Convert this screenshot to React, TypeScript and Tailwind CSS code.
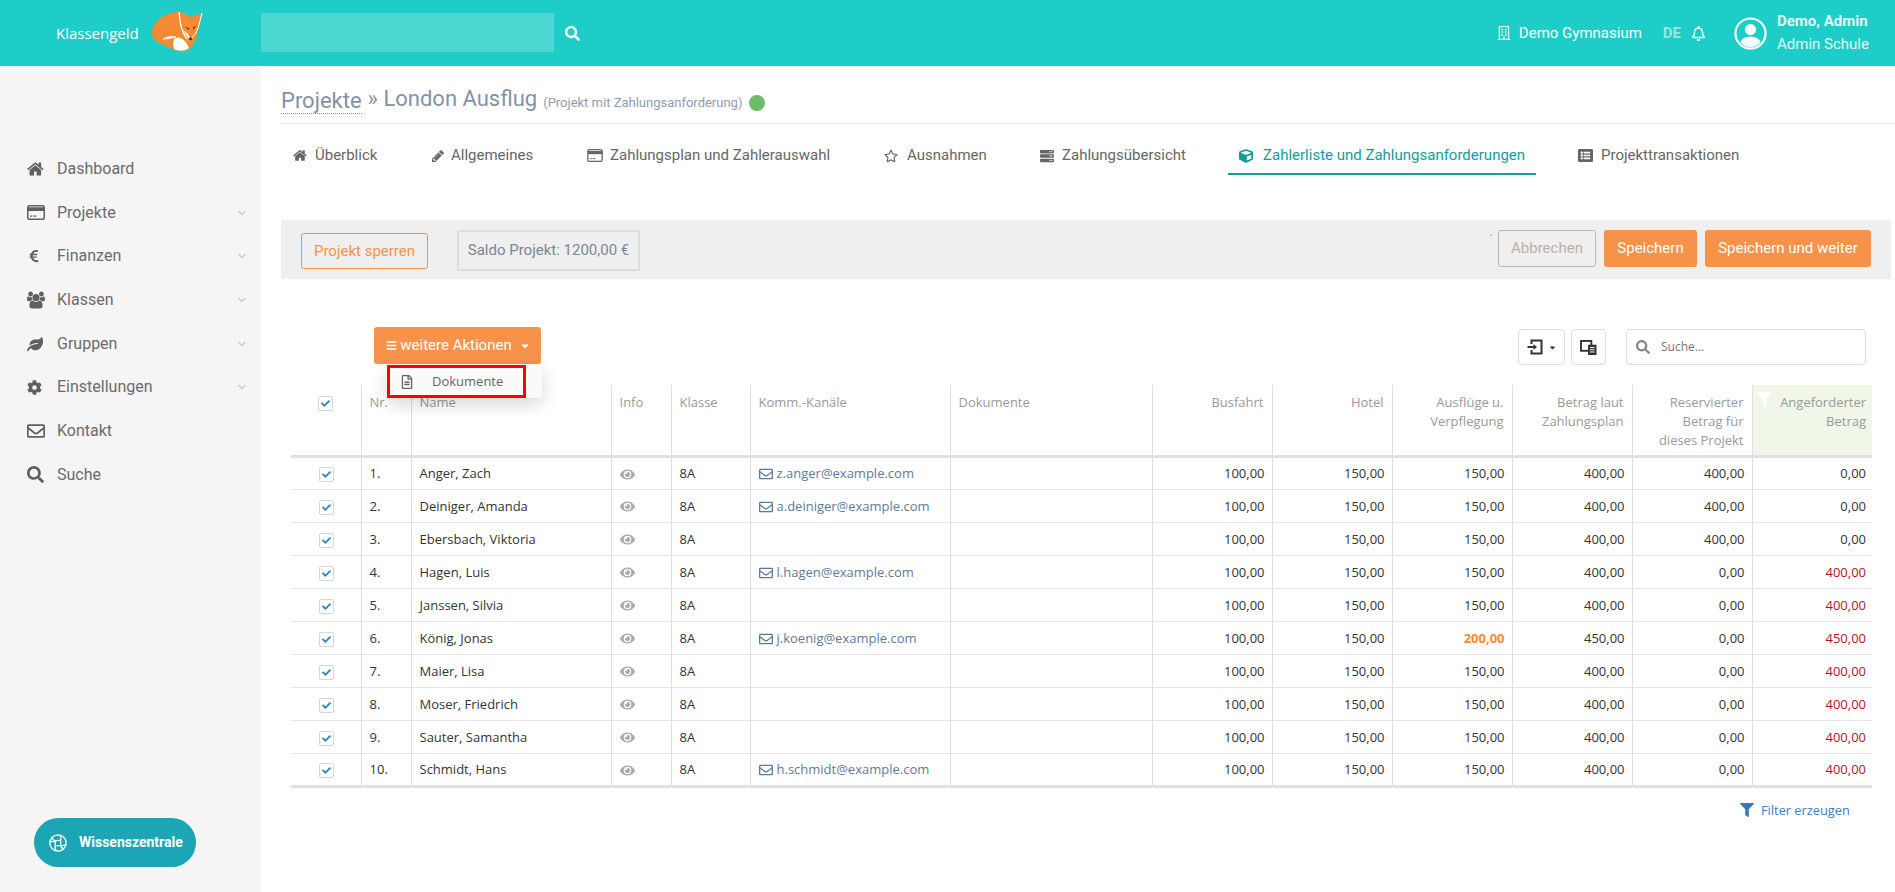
import React from "react";
import { ChevronDown } from "lucide-react";
import {
  FaCaretDown, FaBars, FaCheck, FaCog, FaCube, FaEuroSign, FaEye, FaFilter, FaLeaf, FaListAlt, FaRegBell, FaRegEnvelope,
  FaRegFileAlt, FaRegStar, FaSearch, FaServer, FaRegBuilding,
} from "react-icons/fa";

const HomeIcon = ({ className }: { className?: string }) => (
  <svg viewBox="0 0 1792 1792" fill="currentColor" className={className}>
    <path d="M1408 992v480q0 26-19 45t-45 19h-384v-384h-256v384h-384q-26 0-45-19t-19-45v-480q0-1 .5-3t.5-3l575-474 575 474q1 2 1 6zm223-69l-62 74q-8 9-21 11h-3q-13 0-21-7l-692-577-692 577q-12 8-24 7-13-2-21-11l-62-74q-8-10-7-23.5t11-21.5l719-599q32-26 76-26t76 26l244 204v-195q0-14 9-23t23-9h192q14 0 23 9t9 23v408l219 182q10 8 11 21.5t-7 23.5z" />
  </svg>
);
const PencilIcon = ({ className }: { className?: string }) => (
  <svg viewBox="0 0 1792 1792" fill="currentColor" className={className}>
    <path d="M491 1536l91-91-235-235-91 91v107h128v128h107zm523-928q0-22-22-22-10 0-17 7l-542 542q-7 7-7 17 0 22 22 22 10 0 17-7l542-542q7-7 7-17zm-54-192l416 416-832 832h-416v-416zm683 96q0 53-37 90l-166 166-416-416 166-165q36-38 90-38 53 0 91 38l235 234q37 39 37 91z" />
  </svg>
);
const CardIcon = ({ className }: { className?: string }) => (
  <svg viewBox="0 0 24 20" className={className}>
    <rect x="1" y="1" width="22" height="18" rx="2" fill="none" stroke="currentColor" strokeWidth="2" />
    <rect x="1" y="3" width="22" height="5" fill="currentColor" />
    <rect x="4" y="14" width="3" height="1.6" fill="currentColor" />
    <rect x="8.5" y="14" width="4" height="1.6" fill="currentColor" />
  </svg>
);
const UsersIcon = ({ className }: { className?: string }) => (
  <svg viewBox="0 0 1920 1792" fill="currentColor" className={className}>
    <path d="M593 896q-162 5-265 128h-134q-82 0-138-40.5t-56-118.5q0-353 124-353 6 0 43.5 21t97.5 42.5 119 21.5q67 0 133-23-5 37-5 66 0 139 81 256zm1071 637q0 120-73 189.5t-194 69.5h-874q-121 0-194-69.5t-73-189.5q0-53 3.5-103.5t14-109 26.5-108.5 43-97.5 62-81 85.5-53.5 111.5-20q10 0 43 21.5t73 48 107 48 135 21.5 135-21.5 107-48 73-48 43-21.5q61 0 111.5 20t85.5 53.5 62 81 43 97.5 26.5 108.5 14 109 3.5 103.5zm-1024-1277q0 106-75 181t-181 75-181-75-75-181 75-181 181-75 181 75 75 181zm704 384q0 159-112.5 271.5t-271.5 112.5-271.5-112.5-112.5-271.5 112.5-271.5 271.5-112.5 271.5 112.5 112.5 271.5zm576 225q0 78-56 118.5t-138 40.5h-134q-103-123-265-128 81-117 81-256 0-29-5-66 66 23 133 23 59 0 119-21.5t97.5-42.5 43.5-21q124 0 124 353zm-128-609q0 106-75 181t-181 75-181-75-75-181 75-181 181-75 181 75 75 181z" />
  </svg>
);
const Fox = () => (
  <svg viewBox="0 0 56 50" className="w-[56px] h-[50px] shrink-0 -mt-[4px]">
    <path d="M27 6 C14 7 3 15 2 27 C2 34 9 37 16 40 C24 44 33 48 39 43 C45 38 48 30 49 19 L52 7 L41 11 L29 5 Z" fill="#f58a32" />
    <path d="M29 6 L30.5 18 C32 24 34 29 37 33" fill="none" stroke="#fff" strokeWidth="1.3" />
    <path d="M52 7 L49 19 L46 27 L41 33" fill="none" stroke="#fff" strokeWidth="1" />
    <path d="M33 24 L38 28 L41 34 L45 27 L47 23 L43 31 L40 35 Z" fill="#fff" />
    <path d="M13 33 C18 30 22 30 26 31 C22 32 18 33 13 33 Z" fill="#fff" stroke="#fff" strokeWidth="0.8" />
    <path d="M24 33 C29 30 34 33 37 38 L39 42 C34 46 28 45 24 43 C23 39 23 36 24 33 Z" fill="#fff" />
    <path d="M35 21 L39 24 L39 22 Z M47 20 L43 23.5 L43 21.5 Z" fill="#5b3418" />
    <circle cx="40.5" cy="33" r="1.4" fill="#222" />
  </svg>
);
const GlobeIcon = () => (
  <svg viewBox="0 0 24 24" fill="none" stroke="#fff" strokeWidth="1.5" className="w-5 h-5 shrink-0">
    <circle cx="12" cy="12" r="9.8" />
    <path d="M8.8 9.4 C11 8.6 13 8.6 15 9 C15.6 11 15.6 13 15 15 C13 15.6 11 15.6 9 15 C8.4 13 8.4 11 8.8 9.4 Z" />
    <path d="M8.8 9.4 C6.5 8.5 5 6.5 5.4 4.8 M15 9 C15.8 6.8 15.6 4 14 2.4 M15 15 C17.4 15.6 20 15 21.6 13.4 M9 15 C8.2 17.2 8.4 20 10 21.6 M8.8 9.4 C6.6 10.6 4 10.4 2.4 10 M15 15 C15.6 17 17.2 18.8 19 19" />
  </svg>
);
const ExportIcon = () => (
  <svg viewBox="0 0 16 16" fill="none" stroke="#333" strokeWidth="2" className="w-[16px] h-[16px]">
    <path d="M4.5 5 V1.5 H14.5 V14.5 H4.5 V11" />
    <path d="M0.5 8 H7" />
    <path d="M6.5 5 L10 8 L6.5 11 Z" fill="#333" stroke="none" />
  </svg>
);
const ColumnsIcon = () => (
  <svg viewBox="0 0 18 16" className="w-[17px] h-[15px]">
    <rect x="1" y="1" width="11" height="10.5" fill="none" stroke="#333" strokeWidth="2" />
    <rect x="8.5" y="5" width="9" height="11" fill="#333" />
    <path d="M10.5 8 H15.5 M10.5 10.4 H15.5 M10.5 12.8 H15.5" stroke="#fff" strokeWidth="1" />
  </svg>
);
const Avatar = () => (
  <svg viewBox="0 0 34 34" className="ml-[28px] w-[33px] h-[33px]">
    <defs>
      <clipPath id="av"><circle cx="17" cy="17" r="14" /></clipPath>
    </defs>
    <circle cx="17" cy="17" r="15.5" fill="none" stroke="#fff" strokeWidth="2.2" />
    <circle cx="17" cy="13" r="5.8" fill="#fff" />
    <ellipse cx="17" cy="28" rx="11" ry="8" fill="#fff" clipPath="url(#av)" />
  </svg>
);

const nav = [
  { label: "Dashboard", icon: <HomeIcon className="w-[18px] h-[18px]" /> },
  { label: "Projekte", icon: <CardIcon className="w-[18px] h-[15px]" />, sub: true },
  { label: "Finanzen", icon: <FaEuroSign className="text-[14px]" />, sub: true },
  { label: "Klassen", icon: <UsersIcon className="w-[18px] h-[18px]" />, sub: true },
  { label: "Gruppen", icon: <FaLeaf className="text-[16px]" />, sub: true },
  { label: "Einstellungen", icon: <FaCog className="text-[15px]" />, sub: true },
  { label: "Kontakt", icon: <FaRegEnvelope className="text-[18px]" /> },
  { label: "Suche", icon: <FaSearch className="text-[17px]" /> },
];

const tabs = [
  { label: "Überblick", icon: <HomeIcon className="w-[15px] h-[15px]" />, cls: "w-[138px] pl-[12px] gap-[6px]" },
  { label: "Allgemeines", icon: <PencilIcon className="w-[14px] h-[14px]" />, cls: "w-[156px] pl-[12px] gap-[4px]" },
  { label: "Zahlungsplan und Zahlerauswahl", icon: <CardIcon className="w-[16px] h-[13px]" />, cls: "w-[297px] pl-[12px] gap-[7px]" },
  { label: "Ausnahmen", icon: <FaRegStar className="text-[14px]" />, cls: "w-[156px] pl-[12px] gap-[7px]" },
  { label: "Zahlungsübersicht", icon: <FaServer className="text-[14px]" />, cls: "w-[200px] pl-[12px] gap-[6px]" },
  { label: "Zahlerliste und Zahlungsanforderungen", icon: <FaCube className="text-[14px]" />, cls: "w-[308px] pl-[11px] gap-[8px]", active: true },
  { label: "Projekttransaktionen", icon: <FaListAlt className="text-[15px]" />, cls: "w-[190px] pl-[42px] gap-[7px]" },
];

const rows = [
  ["Anger, Zach", "z.anger@example.com", "150,00", "400,00", "400,00", "0,00"],
  ["Deiniger, Amanda", "a.deiniger@example.com", "150,00", "400,00", "400,00", "0,00"],
  ["Ebersbach, Viktoria", "", "150,00", "400,00", "400,00", "0,00"],
  ["Hagen, Luis", "l.hagen@example.com", "150,00", "400,00", "0,00", "400,00"],
  ["Janssen, Silvia", "", "150,00", "400,00", "0,00", "400,00"],
  ["König, Jonas", "j.koenig@example.com", "200,00", "450,00", "0,00", "450,00"],
  ["Maier, Lisa", "", "150,00", "400,00", "0,00", "400,00"],
  ["Moser, Friedrich", "", "150,00", "400,00", "0,00", "400,00"],
  ["Sauter, Samantha", "", "150,00", "400,00", "0,00", "400,00"],
  ["Schmidt, Hans", "h.schmidt@example.com", "150,00", "400,00", "0,00", "400,00"],
];

const Check = () => (
  <span className="inline-flex w-[15px] h-[15px] items-center justify-center border border-[#cfd8e0] rounded-[2px] bg-white align-middle">
    <FaCheck className="text-[9px] text-[#2f7fc1]" />
  </span>
);

const th = "font-normal align-top border-r border-[#dedede] px-2 pt-[8px] pb-0 text-[13px] leading-[19px] text-[#999]";
const td = "border-r border-[#dedede] border-b border-b-[#e4e4e4] pl-2 pr-[7px] pt-[2px] pb-0 h-[33px] text-[13px] text-[#333]";
const tdr = `${td} text-right`;

export default function App() {
  return (
    <div className="w-[1895px] h-[892px] overflow-hidden bg-white font-['Roboto',sans-serif] flex flex-col">
      <header className="h-[66px] shrink-0 bg-[#1ecdc8] flex items-center text-white">
        <div className="w-[261px] shrink-0 flex items-center pl-[56px] gap-[2px]">
          <span className="font-['Open_Sans',sans-serif] text-[15px] w-[92px]">Klassengeld</span>
          <Fox />
        </div>
        <div className="w-[293px] h-[39px] bg-[#4dd7d3] -mt-[1px]" />
        <FaSearch className="ml-[11px] text-[15px]" />
        <div className="ml-auto flex items-center">
          <FaRegBuilding className="text-[14px] text-[#d9f6f4]" />
          <span className="ml-[8px] text-[15px]">Demo Gymnasium</span>
          <span className="ml-[21px] text-[15px] font-bold text-[#97e8e3]">DE</span>
          <FaRegBell className="ml-[10px] text-[15px]" />
          <Avatar />
          <div className="ml-[10px] w-[118px] flex flex-col text-[15px] leading-[23px]">
            <span className="font-bold text-[#e5f8f7]">Demo, Admin</span>
            <span className="text-[#e5f8f7]">Admin Schule</span>
          </div>
        </div>
      </header>

      <div className="flex flex-1 min-h-0">
        <aside className="relative w-[261px] shrink-0 bg-[#f5f5f5] pt-[81px] text-[#6b6b6b]">
          {nav.map((n) => (
            <div key={n.label} className="h-[43.7px] flex items-center pl-[27px] pr-[13px]">
              <span className="w-[30px] shrink-0 flex items-center text-[#606060]">{n.icon}</span>
              <span className="text-[16px]">{n.label}</span>
              {n.sub && <ChevronDown className="ml-auto w-[12px] h-[12px] text-[#c5cfd9]" strokeWidth={3} />}
            </div>
          ))}
          <div className="absolute left-[34px] top-[752px] w-[162px] h-[49px] rounded-full bg-[#1ca6b5] flex items-center pl-[14px] gap-[11px] text-white">
            <GlobeIcon />
            <span className="font-bold text-[14px] whitespace-nowrap">Wissenszentrale</span>
          </div>
        </aside>

        <main className="flex-1 min-w-0 pl-[20px]">
          <div className="h-[58px] border-b border-[#e9e9e9] flex items-end pb-[9px] text-[#8292a6]">
            <span className="text-[22px] leading-[30px] border-b border-dotted border-[#7f90a6] h-[28px]">Projekte</span>
            <span className="text-[22px] leading-[30px] ml-[6px]">» London Ausflug</span>
            <span className="text-[13px] ml-[6px] mb-[2px] text-[#8f9cb0]">(Projekt mit Zahlungsanforderung)</span>
            <span className="w-[16px] h-[16px] rounded-full bg-[#6cbd6a] ml-[7px] mb-[3px]" />
          </div>

          <nav className="flex h-[51px] mr-[4px] text-[15px] text-[#666]">
            {tabs.map((t) => (
              <div key={t.label} className={`${t.cls} shrink-0 h-[51px] flex items-center pt-[14px] border-b-2 ${t.active ? "border-[#159c99] text-[#159c99]" : "border-transparent"}`}>
                <span className="w-[16px] shrink-0 flex justify-start">{t.icon}</span>
                <span className="whitespace-nowrap">{t.label}</span>
              </div>
            ))}
          </nav>

          <div className="mt-[45px] h-[59px] mr-[4px] bg-[#efefef] flex items-start pl-[20px] pt-[10px] pr-[20px]">
            <button className="mt-[3px] w-[127px] h-[36px] border border-[#f6924a] rounded-[3px] text-[#f6924a] text-[15px]">Projekt sperren</button>
            <div className="ml-[29px] w-[183px] h-[41px] border-2 border-[#ddd] flex items-center justify-center text-[#7a8899] text-[15px]">Saldo Projekt: 1200,00 €</div>
            <span className="ml-auto mr-[5px] text-[#999] text-[11px] leading-[20px]">`</span>
            <button className="w-[98px] h-[37px] border border-[#c7b3a6] rounded-[3px] text-[#c0b0a6] text-[15px]">Abbrechen</button>
            <button className="ml-[8px] w-[93px] h-[37px] bg-[#f6924a] rounded-[3px] text-white text-[15px]">Speichern</button>
            <button className="ml-[8px] w-[166px] h-[37px] bg-[#f6924a] rounded-[3px] text-white text-[15px]">Speichern und weiter</button>
          </div>

          <div className="relative mt-[48px] h-[58px] flex items-start pl-[93px] pr-[29px]">
            <button className="w-[167px] h-[37px] bg-[#f6924a] rounded-[3px] text-white text-[15px] flex items-center justify-center gap-[3px] pl-[2px]">
              <FaBars className="text-[11px]" />weitere Aktionen<FaCaretDown className="text-[12px] ml-[4px]" />
            </button>
            <div className="absolute left-[106px] top-[38px] w-[155px] h-[33px] z-10 bg-[#fafafa] shadow-[0_6px_18px_rgba(0,0,0,0.16)]">
              <div className="w-[139px] h-[33px] border-[3px] border-[#f00] flex items-center pl-[10px] text-[#666] text-[13px] font-['Open_Sans',sans-serif]">
                <FaRegFileAlt className="text-[14px]" />
                <span className="ml-[18px]">Dokumente</span>
              </div>
            </div>
            <div className="ml-auto flex items-start">
              <button className="w-[47px] h-[36px] border border-[#ddd] rounded-[4px] flex items-center justify-center gap-[5px] mt-[2px]">
                <ExportIcon /><FaCaretDown className="text-[9px] text-[#333]" />
              </button>
              <button className="ml-[6px] w-[35px] h-[36px] border border-[#ddd] rounded-[4px] flex items-center justify-center mt-[2px]">
                <ColumnsIcon />
              </button>
              <div className="ml-[20px] w-[240px] h-[36px] mt-[2px] border border-[#ddd] rounded-[4px] flex items-center pl-[9px] text-[12px] text-[#777] font-['Open_Sans',sans-serif]">
                <FaSearch className="text-[14px] text-[#888]" />
                <span className="ml-[11px]">Suche...</span>
              </div>
            </div>
          </div>

          <table className="ml-[10px] w-[1581px] table-fixed border-collapse font-['Open_Sans',sans-serif] border-b-[3px] border-[#e0e0e0]">
            <colgroup>
              <col className="w-[70px]" /><col className="w-[50px]" /><col className="w-[200px]" /><col className="w-[60px]" />
              <col className="w-[79px]" /><col className="w-[200px]" /><col className="w-[202px]" /><col className="w-[120px]" />
              <col className="w-[120px]" /><col className="w-[120px]" /><col className="w-[120px]" /><col className="w-[120px]" /><col className="w-[120px]" />
            </colgroup>
            <thead>
              <tr className="h-[71px] border-b-[3px] border-[#e0e0e0]">
                <th className={`${th} text-center`}><Check /></th>
                <th className={`${th} text-left`}>Nr.</th>
                <th className={`${th} text-left`}>Name</th>
                <th className={`${th} text-left`}>Info</th>
                <th className={`${th} text-left`}>Klasse</th>
                <th className={`${th} text-left`}>Komm.-Kanäle</th>
                <th className={`${th} text-left`}>Dokumente</th>
                <th className={`${th} text-right`}>Busfahrt</th>
                <th className={`${th} text-right`}>Hotel</th>
                <th className={`${th} text-right`}>Ausflüge u. Verpflegung</th>
                <th className={`${th} text-right`}>Betrag laut Zahlungsplan</th>
                <th className={`${th} text-right pl-[18px]`}>Reservierter Betrag für dieses Projekt</th>
                <th className="font-normal align-top bg-[#f0f6e8] pr-[6px] pt-[8px] text-[13px] leading-[19px] text-[#999] text-right relative">
                  <FaFilter className="absolute left-[4px] top-[7px] text-[15px] text-white" />
                  <span className="block pl-[24px]">Angeforderter Betrag</span>
                </th>
              </tr>
            </thead>
            <tbody>
              {rows.map((r, i) => (
                <tr key={r[0]}>
                  <td className={`${td} text-center`}><Check /></td>
                  <td className={td}>{i + 1}.</td>
                  <td className={td}>{r[0]}</td>
                  <td className={td}><FaEye className="text-[15px] text-[#aaa]" /></td>
                  <td className={td}>8A</td>
                  <td className={`${td} whitespace-nowrap`}>
                    {r[1] && (
                      <span className="flex items-center gap-[4px] text-[#5f7a97]">
                        <FaRegEnvelope className="text-[14px]" />{r[1]}
                      </span>
                    )}
                  </td>
                  <td className={td}></td>
                  <td className={tdr}>100,00</td>
                  <td className={tdr}>150,00</td>
                  <td className={r[2] === "200,00" ? `${tdr} !text-[#f58a2e] font-bold` : tdr}>{r[2]}</td>
                  <td className={tdr}>{r[3]}</td>
                  <td className={tdr}>{r[4]}</td>
                  <td className={`h-[33px] border-b border-b-[#e4e4e4] pr-[6px] pt-[2px] text-right text-[13px] ${r[5] === "0,00" ? "text-[#333]" : "text-[#b5122a]"}`}>{r[5]}</td>
                </tr>
              ))}
            </tbody>
          </table>

          <div className="ml-[1459px] mt-[13px] flex items-center gap-[7px] text-[#3b7dbb] text-[12.8px] font-['Open_Sans',sans-serif] whitespace-nowrap">
            <FaFilter className="text-[14px] text-[#337ab7]" />
            <span>Filter erzeugen</span>
          </div>
        </main>
      </div>
    </div>
  );
}
